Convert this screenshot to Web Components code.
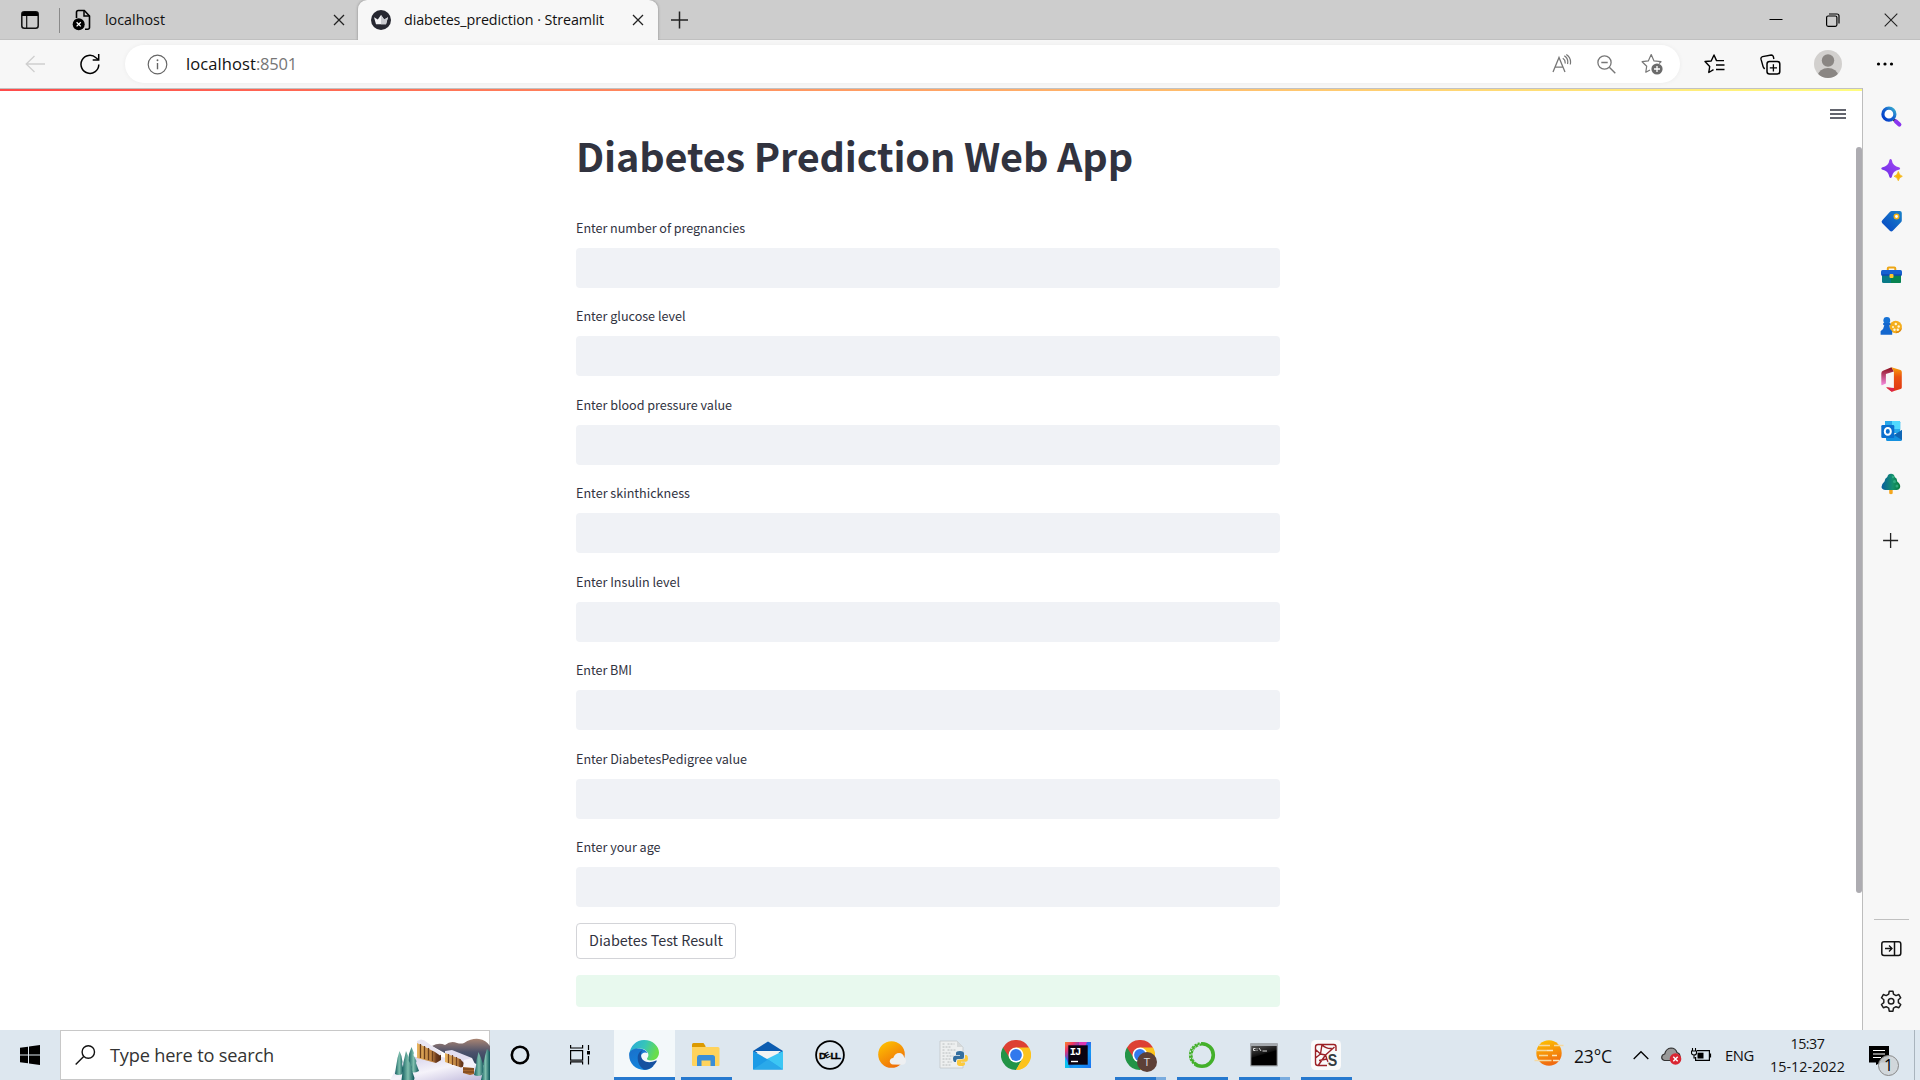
<!DOCTYPE html>
<html lang="en">
<head>
<meta charset="utf-8">
<title>diabetes_prediction · Streamlit</title>
<style>
html,body{margin:0;height:100%;overflow:hidden;background:#fff}
body{font-family:"Open Sans","Noto Sans",sans-serif;color:#111}
</style>
</head>
<body>
<desktop-screen></desktop-screen>
<script>
const ICONS = {
tabs:[18,18,`<rect x=".8" y=".8" width="16.4" height="16.4" rx="2.5" fill="none" stroke="#111" stroke-width="1.5"/><path d="M1 5V3a2 2 0 0 1 2-2h12a2 2 0 0 1 2 2v2z" fill="#000"/><path d="M5.7 5v12" stroke="#111" stroke-width="1.2"/>`],
filex:[20,22,`<path d="M4.5 9V3.3A1.8 1.8 0 0 1 6.300 1.500h6l5.200 5.500v11.500a1.800 1.800 0 0 1-1.800 1.800h-2.700" fill="none" stroke="#000" stroke-width="1.600"/><path d="M12 1.500V7h5.500" fill="none" stroke="#000" stroke-width="1.500"/><circle cx="6.700" cy="15.300" r="6" fill="#000"/><path d="M4.600 13.200l4.200 4.200m0-4.200l-4.200 4.200" stroke="#fff" stroke-width="1.300"/>`],
close:[12,12,`<path d="M1 1l10 10M11 1L1 11" stroke="#222" stroke-width="1.300"/>`],
plus:[18,18,`<path d="M8.500 .5v17M0 9h17" stroke="#222" stroke-width="1.500"/>`],
crown:[20,20,`<circle cx="10" cy="10" r="10" fill="#262730"/><path d="M3 7.200l3.800 2.300L10 5l3.200 4.500L17 7.200l-2 7H5z" fill="#f2f2f4"/><path d="M10 5l3.200 4.500L17 7.200l-2 7H10z" fill="#c9cacf"/>`],
min:[14,14,`<path d="M.5 6.500h13" stroke="#000"/>`],
restore:[14,14,`<rect x=".6" y="3" width="10.300" height="10.300" rx="1.500" fill="none" stroke="#000" stroke-width="1.200"/><path d="M3 1h8a2 2 0 0 1 2 2v7.500" fill="none" stroke="#000" stroke-width="1.200"/>`],
winclose:[14,14,`<path d="M.7.7l12.600 12.600M13.300.7L.7 13.300" stroke="#222" stroke-width="1.100"/>`],
back:[20,18,`<path d="M9.500 1L1.200 9l8.300 8M1.200 9H20" fill="none" stroke="#cfcfcf" stroke-width="1.300"/>`],
reload:[20,22,`<path d="M18.800 11.500A8.900 9 0 1 1 16 4.800l2.300 2" fill="none" stroke="#000" stroke-width="1.500"/><path d="M18.700 1v6h-6" fill="none" stroke="#000" stroke-width="1.500"/>`],
info:[21,21,`<circle cx="10.500" cy="10.500" r="9.300" fill="none" stroke="#666" stroke-width="1.200"/><path d="M10.500 9v6.300" stroke="#666" stroke-width="1.400"/><circle cx="10.500" cy="6.300" r=".95" fill="#666"/>`],
read:[20,20,`<path d="M1 18L7 3.500l6 14.500M3 13.200h8" fill="none" stroke="#777" stroke-width="1.300"/><path d="M10.800 4.300q2.900 2 2.200 5.200M12.300 1.800q4.500 3 3.200 8.200M14.300 .5q5.300 3.500 4 10" fill="none" stroke="#777" stroke-width="1.200"/>`],
zoomout:[19,19,`<circle cx="7.500" cy="7.500" r="6.600" fill="none" stroke="#777" stroke-width="1.300"/><path d="M4.300 7.500h6.400M12.300 12.300l6 6" stroke="#777" stroke-width="1.400"/>`],
staradd:[22,22,`<path d="M9 17L4.800 19.200l.9-6L1.100 8.700l6.200-.8L10.200 1.500 13 7.900l7 .8-2 1.800" fill="none" stroke="#777" stroke-width="1.200" stroke-linejoin="round"/><circle cx="16" cy="16" r="5.600" fill="#6b6b6b"/><path d="M16 13v6M13 16h6" stroke="#fff" stroke-width="1.300"/>`],
starlist:[21,20,`<path d="M9.500 15.700L4.800 18.500l.9-6L1 7.500 7.200 7 10 1l2.500 5.600H20" fill="none" stroke="#000" stroke-width="1.400" stroke-linejoin="round"/><path d="M12 11h8.500M12 15.500h8.500" stroke="#000" stroke-width="1.400"/>`],
collect:[21,21,`<rect x="7" y="7.500" width="12.800" height="12.500" rx="2.500" fill="none" stroke="#000" stroke-width="1.500"/><path d="M13.400 10.200v7.200M9.800 13.800h7.200" stroke="#000" stroke-width="1.300"/><path d="M4.600 15L3.200 13 1 5.200q-.4-2 1.500-2.600L11.300 1q1.500 0 2 1.500l.6 2.500" fill="none" stroke="#000" stroke-width="1.400"/>`],
avatar:[28,28,`<defs><clipPath id="c"><circle cx="14" cy="14" r="14"/></clipPath></defs><g clip-path="url(#c)"><rect width="28" height="28" fill="#d2d0ce"/><circle cx="14" cy="10.500" r="6.200" fill="#8a8683"/><ellipse cx="14" cy="25.500" rx="10" ry="7.500" fill="#8a8683"/></g>`],
dots:[18,6,`<circle cx="2.500" cy="3" r="1.600"/><circle cx="9" cy="3" r="1.600"/><circle cx="15.500" cy="3" r="1.600"/>`],
menu:[16,10,`<path d="M0 1h16M0 5h16M0 9h16" stroke="#31333f" stroke-width="1.700"/>`],
sSearch:[24,24,`<defs><linearGradient id="g" x1="0" y1="1" x2="1" y2="0"><stop offset="0" stop-color="#0038c8"/><stop offset=".55" stop-color="#1562d0"/><stop offset="1" stop-color="#3ab0cf"/></linearGradient></defs><path d="M14.800 15.500l2 2" stroke="#333" stroke-width="3"/><circle cx="9.900" cy="10.200" r="6" fill="#fff" stroke="url(#g)" stroke-width="3.200"/><path d="M17 17.500l3.300 3" stroke="#8a35ee" stroke-width="4.200" stroke-linecap="round"/>`],
sSpark:[24,24,`<defs><linearGradient id="g" x1="0" y1="1" x2="1" y2="0"><stop offset="0" stop-color="#6a2be8"/><stop offset="1" stop-color="#a44af2"/></linearGradient></defs><path d="M10.500 2.700q1.100-1.600 2.200 0 .8 6.300 7.800 7.800 1.400.9 0 1.900-7 1.200-7.800 7.900-1.100 1.600-2.200 0-.9-6.700-7.600-7.900-1.400-1 0-1.900 6.800-1.300 7.600-7.800z" fill="url(#g)"/><path d="M19.300 14.500q.8 4 4 4.800-3.200.8-4 4.400-.8-3.600-4.200-4.400 3.400-.8 4.200-4.800z" fill="#f5b40d" stroke="#f5b40d" stroke-width=".8"/>`],
sTag:[24,24,`<defs><linearGradient id="g" x1="0" y1="1" x2="1" y2="0"><stop offset="0" stop-color="#0645c5"/><stop offset="1" stop-color="#1b82c7"/></linearGradient></defs><path d="M12.800 2h8q2 0 2 2v7.500q0 1-.8 1.800l-8.200 8.500q-1.500 1.300-3 0l-7.500-7.500q-1.500-1.500 0-3L11 2.700q.8-.7 1.800-.7z" fill="url(#g)"/><circle cx="17.500" cy="7.500" r="2.200" fill="#fff" stroke="#f3b211" stroke-width="1.500"/>`],
sCase:[24,24,`<path d="M8.800 8V5.500q0-1 1-1h5.500q1 0 1 1V8" fill="none" stroke="#eda615" stroke-width="2"/><path d="M3 11h19v7.500q0 1.500-1.500 1.500h-16Q3 20 3 18.500z" fill="#087a86"/><path d="M12 12h10v6.500q0 1.500-1.500 1.500H12z" fill="#078350"/><rect x="2" y="7" width="21" height="5.500" rx="1.500" fill="#1660d0"/><path d="M2.500 12h20.200" stroke="#093da5"/><rect x="10.500" y="11" width="4" height="4" rx="1" fill="#ffc62b"/>`],
sChess:[24,24,`<circle cx="16.700" cy="13" r="6.200" fill="#f5ae1d"/><path d="M17 19.200a6.200 6.200 0 0 0 6-6q-2 4-6 4.500z" fill="#dc8810"/><g fill="#fff6d8"><circle cx="16.800" cy="10" r="1.200"/><circle cx="14" cy="13" r="1"/><circle cx="19.700" cy="12.500" r="1.200"/><circle cx="15.500" cy="15.700" r="1.200"/><circle cx="18.800" cy="15.700" r="1.200"/></g><circle cx="7.800" cy="6.500" r="3.400" fill="#1672d6"/><path d="M4.200 9h7.200v2l-1.200.3q0 3.500 3 6v3.500H1.600v-3.500q3.400-2.500 3.700-6L4.200 11z" fill="#1467ce"/>`],
sOffice:[24,25,`<defs><linearGradient id="g" x1="0" y1="0" x2="0" y2="1"><stop offset="0" stop-color="#f8a30a"/><stop offset=".4" stop-color="#ea5212"/><stop offset="1" stop-color="#e03514"/></linearGradient><linearGradient id="h" x1="0" y1="0" x2="0" y2="1"><stop offset="0" stop-color="#8a0b16"/><stop offset="1" stop-color="#f58be0"/></linearGradient></defs><path d="M12.500.2L4 3.700Q2.300 4.500 2.300 6.500v11q0 1 1.300.5l3.300-1.600V7l8-2.500z" fill="url(#h)"/><path d="M12.500.2l9 2.700q1.300.5 1.300 2v15.500q0 1-1.200 1.500l-9 2.800-5.500-4.200 7.800.7V4.500z" fill="url(#g)"/><path d="M7.200 20.300l7.800.7v3l-2.500.6z" fill="#dc244c"/>`],
sOutlook:[24,24,`<path d="M6 2h14q1.200 0 1.200 1.200V14H6z" fill="#28a8ea"/><path d="M13 2h7q1.200 0 1.200 1.200V10H13z" fill="#50d9ff"/><path d="M7 12l8 4 8-5v9.500q0 1.500-1.500 1.500H8.500Q7 22 7 20.500z" fill="#1490df"/><path d="M15 16l8-5v10z" fill="#1066b5"/><rect x="2.300" y="6" width="13" height="13" rx="1.300" fill="#0a6fce"/><ellipse cx="8.800" cy="12.400" rx="3" ry="3.400" fill="none" stroke="#fff" stroke-width="2"/>`],
sTree:[24,24,`<defs><linearGradient id="g"><stop offset="0" stop-color="#075ca0"/><stop offset=".6" stop-color="#15916c"/><stop offset="1" stop-color="#087a3b"/></linearGradient></defs><path d="M10.200 17h3.500v4.500q-1.700 1.500-3.500 0z" fill="#f5a71d"/><path d="M12 1.800q3 0 3.700 3.300 2.700 1.500 2.500 4.400 3.300 2.200 3 5.500-.7 3-3.700 3h-11q-3.700-.3-4-3 0-3 3-5.500.3-3.500 2.800-4.500.8-3.200 3.700-3.200z" fill="url(#g)"/><g fill="#3cb98e" opacity=".7"><circle cx="14" cy="5" r="1.200"/><circle cx="15.500" cy="9.500" r="1.500"/><circle cx="18" cy="14" r="1.500"/></g>`],
sPlus:[24,24,`<path d="M11.600 5v15M4.100 12.500h15" stroke="#222" stroke-width="1.300"/>`],
sPanel:[24,24,`<rect x="2.800" y="5.700" width="19" height="13.700" rx="2.200" fill="none" stroke="#111" stroke-width="1.500"/><path d="M15.500 5.500v14" stroke="#111" stroke-width="1.500"/><path d="M6 12.500h7M10 9.500l3 3-3 3" fill="none" stroke="#111" stroke-width="1.300"/>`],
sGear:[24,24,`<path d="M10.240 2.150L13.960 2.150L14.480 5.150L17 6.600L19.860 5.550L21.720 8.780L19.380 10.730L19.380 13.570L21.720 15.520L19.860 18.750L17 17.700L14.480 19.150L13.960 22.150L10.240 22.150L9.720 19.150L7.200 17.700L4.340 18.750L2.480 15.520L4.820 13.570L4.820 10.730L2.480 8.780L4.340 5.550L7.200 6.600L9.720 5.150z" fill="none" stroke="#1b1b1b" stroke-width="1.500" stroke-linejoin="round"/><circle cx="12.100" cy="12.200" r="2.800" fill="none" stroke="#1b1b1b" stroke-width="1.500"/>`],
win:[20,20,`<path d="M0 2.800L8 1.700v7.700H0zM9 1.500L20 0v9.400H9zM0 10.400h8v7.900l-8-1.100zM9 10.400h11V20L9 18.400z" fill="#000"/>`],
lens:[21,20,`<circle cx="13.300" cy="7" r="6.200" fill="none" stroke="#111" stroke-width="1.400"/><path d="M8.700 11.500L.7 19.400" stroke="#111" stroke-width="1.400"/>`],
village:[100,42,`<defs><linearGradient id="s" x1="0" y1="0" x2="1" y2="1"><stop offset="0" stop-color="#cfcbe8"/><stop offset=".5" stop-color="#f5f3fa"/><stop offset="1" stop-color="#bdb6da"/></linearGradient><linearGradient id="m" x1="0" y1="0" x2="0" y2="1"><stop offset="0" stop-color="#a98472"/><stop offset=".45" stop-color="#4c526b"/><stop offset="1" stop-color="#273e58"/></linearGradient><linearGradient id="w"><stop offset="0" stop-color="#e9b45f"/><stop offset=".65" stop-color="#b97c3d"/><stop offset=".8" stop-color="#6c3b1f"/><stop offset="1" stop-color="#54290f"/></linearGradient><linearGradient id="t"><stop offset="0" stop-color="#0d5a5c"/><stop offset=".5" stop-color="#7fbfae"/><stop offset="1" stop-color="#0b5257"/></linearGradient></defs>
<path d="M42 8q7-4 13-1 6-5 12-2 4 1 7 0 8-5 15-4Q96 2 100 8v22L60 18z" fill="url(#m)"/>
<path d="M0 42Q8 25 22 19L52 19 80 26l20 2v14z" fill="url(#s)"/>
<path d="M27 4L46 13l5 4v5l-5 3-19-5z" fill="url(#w)"/><path d="M27 3l4-1.500 3 .8L52 15l-2 2.500-5-3.500L27 5z" fill="#e9e6f3"/><path d="M30.500 6v14m4-12v13m4-11v12m4-9v10" stroke="#6b3f1c" stroke-width="1.300"/>
<path d="M55 14L71 20l4 4v4l-4 1.500L55 24z" fill="url(#w)"/><path d="M55 13l7-1 20 8-2 4-6 1-4-4-15-6z" fill="#e3dff0"/><path d="M58.500 16v9m4-8v10m4-8v9m3.500-7v8" stroke="#774520" stroke-width="1.200"/>
<path d="M73 29h11v7l-4 1-7-2z" fill="#a5642b"/><path d="M73 31h11M73 34h11" stroke="#6b3a18"/><path d="M74 22l8-2 3 6-1 4-11-1z" fill="#f4f2fa"/>
<g fill="url(#t)"><path d="M9.500 13l2 5 1 6-.5 2 1.500 5-1 5q-4 2-7.500 0l1-7 .5-3 1-6z"/><path d="M21.500 9l2.500 6-.5 2 3 6-.5 2 3 8q-6 3-10 0l-1-8 1-9z"/><path d="M16 13l3 7-.5 2 3.500 7-.5 2 3 9-.5 2H11.500l1-8 1-10z"/><path d="M88.500 14l2.500 6 2 6 1 6-2 5q-4 2-8 0l2-9 .5-6z"/><path d="M97 11l3 3v28h-9l2-9 .5-8 1.500-7z"/></g>`],
cortana:[20,20,`<circle cx="10" cy="10" r="8.200" fill="none" stroke="#000" stroke-width="2.600"/>`],
taskview:[20,20,`<rect x=".6" y="5.600" width="12" height="9.500" fill="none" stroke="#000" stroke-width="1.200"/><path d="M.6 0v3h12V0M.6 19.500v-2.700h12v2.700M18.500 0v5M18.500 11v8.500" fill="none" stroke="#000" stroke-width="1.200"/><path d="M17 6h3v3.500h-3z"/>`],
edge:[31,30,`<defs><linearGradient id="a" x1="0" y1="0" x2="1" y2=".3"><stop offset="0" stop-color="#27a8dd"/><stop offset=".55" stop-color="#37c5b8"/><stop offset="1" stop-color="#68dd4b"/></linearGradient><linearGradient id="b" x1="0" y1="0" x2=".6" y2="1"><stop offset="0" stop-color="#1b6fc9"/><stop offset="1" stop-color="#1187df"/></linearGradient></defs><path d="M.5 14C1 6 7.500 0 15 0c9 0 15 6.500 15 12.500 0 5-3.800 8-8 8-3 0-4.200-1-4-2 .2-.8 1.400-1.500 1.400-3.500 0-3-3.500-6.500-8.400-6.500C6 8.500 1.500 11 .5 14z" fill="url(#a)"/><path d="M.2 13.500C1.500 9.500 6 8 10.500 8.500c4 .3 7 2.300 8 4.500-3-1.500-6 0-6.500 3-.7 6 5 11 12.500 10-3 3-6.500 4-9.500 4C6.500 30-.7 23 .2 13.500z" fill="url(#b)"/><path d="M8.800 16c.5-3 2.500-5 5-6-2 2-2 3.500-1.700 6C13 22 20 24 27 20.500c.8-.3 1 .2.700.8C25 26 21 29.500 16 29.800 11 28 8 22 8.800 16z" fill="#1551a0"/>`],
folder:[29,24,`<path d="M0 1.500Q0 0 1.500 0h10l2 3v5H0z" fill="#dc9a00"/><path d="M0 4h26q1.500 0 1.500 1.500V22q0 1-1 1H1.300Q0 23 0 22z" fill="#ffd35c"/><path d="M5 23V14.500Q5 12 7 12h13.500q2.500 0 2.500 2.500V23h-4.500v-5.500h-9V23z" fill="#3a8ed8"/>`],
mail:[30,29,`<path d="M0 10L15 .5 30 10v2H0z" fill="#0c5cb0"/><path d="M2 10h26L15 20z" fill="#f3f3f3"/><path d="M30 10v18.500L13 18.500z" fill="#3cc6f4"/><path d="M0 10l14 8 16 10.500H0z" fill="#1c9be6"/><path d="M0 28.500L15 18.500l15 10z" fill="#2aa9ea"/>`],
dell:[30,30,`<circle cx="15" cy="15" r="13.900" fill="none" stroke="#000" stroke-width="1.800"/><text x="4" y="18.500" font-family="Liberation Sans" font-weight="700" font-size="9.700" stroke="#000" stroke-width=".35">D</text><text x="0" y="0" transform="translate(11.200 18.700) rotate(-28)" font-family="Liberation Sans" font-weight="700" font-size="8">E</text><text x="15.500" y="18.500" font-family="Liberation Sans" font-weight="700" font-size="9.700" stroke="#000" stroke-width=".35" textLength="10.500">LL</text>`],
sun:[28,28,`<defs><linearGradient id="g" x1="0" y1="0" x2=".6" y2="1"><stop offset="0" stop-color="#ffc800"/><stop offset="1" stop-color="#ef700a"/></linearGradient></defs><circle cx="13.500" cy="13.500" r="13.300" fill="url(#g)"/><path d="M15 23.500q-3-.3-3.300-3.200.3-3 3.500-3.300 1.800-5 6-5 4 .2 5 4.500 1.800.7 1.800 3.500-.3 3.500-3.500 3.700z" fill="#eef0f2"/>`],
pydoc:[30,30,`<path d="M1 1h17l6 6v21H1z" fill="#edefef" stroke="#c3c8ca" stroke-width=".8"/><path d="M18 1v6h6" fill="#d5d9da"/><path d="M3.500 4h3m2 0h7M3.500 7h9M3.500 10h3m2 0h8M3.500 13h8M3.500 16h2m2 0h7M3.500 19h8M3.500 22h3m2 0h4M3.500 25h8" stroke="#b8bcbd" stroke-dasharray="2 1"/><path d="M21 11q4 0 4 2.500v3.500q0 2-2 2h-4q-2 0-2 2v1h-1.500Q14 21.500 14 18.700t2.500-3H21v-.8h-4V13q0-2 4-2z" fill="#346f9f"/><path d="M22 26q-4 0-4-2.300V21q0-1.500 2-1.500h4q2 0 2-2V15h1.500Q29 15.500 29 18.500t-2 3.300h-5v.7h4V24q0 2-4 2z" fill="#fcca3d"/>`],
chrome:[30,30,`<path d="M15 15L2 7.500A15 15 0 0 1 28 7.500z" fill="#dd4033"/><path d="M15 15L2 7.500A15 15 0 0 0 15 30z" fill="#229446"/><path d="M15 7.500h13A15 15 0 0 1 15 30l6-11z" fill="#fcc31d"/><path d="M2 7.500L8.500 18.700 15 30l6.500-11.300z" fill="#229446"/><path d="M15 30l6.500-11.300L21 8H28A15 15 0 0 1 15 30z" fill="#fcc31d"/><path d="M2 7.500L8 17V7.500z" fill="#dd4033"/><circle cx="15" cy="15" r="7.500" fill="#fff"/><circle cx="15" cy="15" r="5.900" fill="#3179ed"/>`],
ij:[26,26,`<defs><linearGradient id="g" x1="0" y1="0" x2="1" y2="1"><stop offset="0" stop-color="#f78b2b"/><stop offset=".18" stop-color="#ee3466"/><stop offset=".4" stop-color="#3b55e8"/><stop offset=".65" stop-color="#159af5"/><stop offset="1" stop-color="#1b72f1"/></linearGradient></defs><rect width="26" height="26" fill="url(#g)"/><path d="M0 26V14l5 12z" fill="#0bc0ef"/><path d="M14 0h8l-2 5h-6z" fill="#dd37b4"/><rect x="3.300" y="3.300" width="19.400" height="19.400" fill="#0b0310"/><text x="4.700" y="13.400" fill="#fff" font-family="Liberation Mono" font-weight="700" font-size="10.500" textLength="11.500">IJ</text><path d="M6 19.500h7" stroke="#fff" stroke-width="1.400"/>`],
anaconda:[28,28,`<circle cx="14" cy="14" r="11.300" fill="none" stroke="#43b02a" stroke-width="3.600"/><path d="M13 1.500Q2 3.500 2 14t6 10" fill="none" stroke="#dde8ee" stroke-width="1.300" stroke-dasharray="1.500 2"/><path d="M12 4Q4 6 4 14q0 5 3 7" fill="none" stroke="#dde8ee" stroke-width=".9" stroke-dasharray="2 2"/>`],
cmd:[29,24,`<defs><linearGradient id="g" x1="0" y1="0" x2=".4" y2="1"><stop offset="0" stop-color="#555"/><stop offset=".5" stop-color="#111"/><stop offset=".55" stop-color="#000"/></linearGradient></defs><rect width="28" height="23.500" rx="1" fill="#a4a9ae"/><rect x="1.300" y="3" width="25.400" height="19.300" fill="url(#g)"/><path d="M3.500 5.500h2M3.500 7.500h2M3.500 5.500v2M7 5.500v.8M7 7v.8M9 5l2 3M12.500 8H17" stroke="#eee" stroke-width=".9" fill="none"/>`],
spyder:[30,30,`<rect width="30" height="30" rx="4.500" fill="#fafafa"/><path d="M25 11V7q0-2.500-2.300-2.500H7Q4.500 4.500 4.500 7v16q0 2.500 2.500 2.500h9M11 4.500L9.500 14l-5 4M9.500 14L4.500 9.500M9.500 14l5 1 9-8M14.500 15L18 25M14.500 15l-7 10M8 20.500l8-1.500M11.300 5q4 4 9.500 3.500" fill="none" stroke="#9b1f24" stroke-width="1.400" stroke-linejoin="round"/><text x="16.800" y="25.500" font-family="Liberation Sans" font-weight="700" font-size="16.500" fill="#33393e" stroke="#fafafa" stroke-width="2" paint-order="stroke" textLength="9.500" lengthAdjust="spacingAndGlyphs">S</text>`],
haze:[30,26,`<defs><linearGradient id="g" x1="0" y1="0" x2=".3" y2="1"><stop offset="0" stop-color="#ffc500"/><stop offset="1" stop-color="#f06b10"/></linearGradient></defs><circle cx="15" cy="13" r="12.700" fill="url(#g)"/><path d="M5 5.500h11M20 5.500h9.500M3 10.500h10M5 15.500h9M.5 20.500h17" stroke="#f5d9a0" stroke-width="1.600"/><path d="M13 10.500h6M18 15.500h5M19 20.500h6" stroke="#fbe7be" stroke-width="1.300"/>`],
chev:[16,10,`<path d="M.7 9L8 1.700 15.300 9" fill="none" stroke="#000" stroke-width="1.300"/>`],
cloud:[21,18,`<path d="M3.500 13.500Q.7 13 .7 10.300.8 7.500 3.700 7 5 1.500 10 1q4.500 0 6 4.500 3 .8 3 4v4z" fill="#999" stroke="#333" stroke-width="1.200"/><circle cx="14.500" cy="12" r="5.800" fill="#d92632"/><path d="M12.300 9.800l4.400 4.400m0-4.400l-4.400 4.400" stroke="#fff" stroke-width="1.400"/>`],
battery:[21,14,`<path d="M6 2.600h12.400v9.800H4.600V9M19.500 5.500v4" fill="none" stroke="#000" stroke-width="1.200"/><path d="M6.500 4.700h6v5.800h-6z"/><path d="M1.500 0v3M4.500 0v3M.5 3h5v2q0 2-2.500 2T.5 5zM3 7v3h1.500" fill="none" stroke="#000" stroke-width="1.100"/>`],
note:[20,19,`<path d="M0 0h20v16.500h-8L7 19v-2.500H0z"/><path d="M4 4.500h12M4 8h12M4 11.500h8" stroke="#fff" stroke-width="1.100"/>`]
};

const define = (name, css, html, setup) => customElements.define(name, class extends HTMLElement {
  connectedCallback() {
    if (this.shadowRoot) return;
    const root = this.attachShadow({mode: "open"});
    root.innerHTML = `<style>:host{display:block;box-sizing:border-box}*{box-sizing:border-box}${css}</style>${typeof html === "function" ? html(this) : html}`;
    if (setup) setup(this, root);
  }
});

/* An icon by name, at its natural size. */
define("ui-icon", `:host{flex:none}svg{display:block}`, el => {
  const [w, h, body] = ICONS[el.getAttribute("name")];
  return `<svg width="${w}" height="${h}" viewBox="0 0 ${w} ${h}">${body}</svg>`;
});

/* A single line of text tracked so that it fills the width given in "w". */
define("fit-text", `:host{flex:none;white-space:nowrap}span{display:inline-block}`, `<span><slot></slot></span>`, (el, root) => {
  const w = +el.getAttribute("w"), span = root.querySelector("span"), n = el.textContent.length;
  el.style.width = w + "px";
  const natural = span.getBoundingClientRect().width;
  span.style.letterSpacing = ((w - natural) / n).toFixed(3) + "px";
});

define("browser-tab", `:host{display:flex;align-items:center;flex:none;height:40px;font-size:14.300px;line-height:20px;color:#111}
:host([active]){background:#f7f7f7;border-radius:9px 9px 0 0;box-shadow:0 0 3px #0005;clip-path:inset(0 -4px 0 -4px)}
.x{margin-left:auto}fit-text{margin-left:13px}`,
el => `<ui-icon name="${el.getAttribute("icon")}"></ui-icon><fit-text w="${el.getAttribute("w")}">${el.getAttribute("label")}</fit-text><ui-icon class="x" name="close"></ui-icon>`);

define("tab-strip", `:host{display:flex;align-items:center;height:40px;background:#cdcdcd;box-shadow:inset 0 -1px 0 #c0c0c0}
.bar{width:1px;height:25px;background:#8a8a8a;margin-left:20px;flex:none}`,
`<ui-icon name="tabs" style="margin-left:21px"></ui-icon><div class="bar"></div>
<browser-tab icon="filex" label="localhost" w="60" style="width:298px;padding:0 13px 0 12px"></browser-tab>
<browser-tab active icon="crown" label="diabetes_prediction · Streamlit" w="200" style="width:300px;padding:0 14px 0 13px"></browser-tab>
<ui-icon name="plus" style="margin-left:13px"></ui-icon>
<ui-icon name="min" style="margin-left:auto"></ui-icon><ui-icon name="restore" style="margin-left:43px"></ui-icon><ui-icon name="winclose" style="margin:0 22px 0 44px"></ui-icon>`);

define("tool-bar", `:host{display:flex;align-items:center;height:48px;background:#f7f7f7}
.omni{display:flex;align-items:center;flex:none;width:1555px;height:38px;margin-left:25px;padding:0 17px 0 22px;border-radius:19px;background:#fff;box-shadow:0 0 5px #0000000d;font-size:16.500px;line-height:22px}
.omni fit-text{color:#111;margin-left:18px}.omni fit-text+fit-text{color:#767676;margin-left:0}`,
`<ui-icon name="back" style="margin-left:25px"></ui-icon><ui-icon name="reload" style="margin-left:35px"></ui-icon>
<div class="omni"><ui-icon name="info"></ui-icon><fit-text w="70">localhost</fit-text><fit-text w="41">:8501</fit-text>
<ui-icon name="read" style="margin-left:auto"></ui-icon><ui-icon name="zoomout" style="margin-left:25px"></ui-icon><ui-icon name="staradd" style="margin-left:25px"></ui-icon></div>
<ui-icon name="starlist" style="margin-left:24px"></ui-icon><ui-icon name="collect" style="margin-left:35px"></ui-icon><ui-icon name="avatar" style="margin-left:33px"></ui-icon><ui-icon name="dots" style="margin-left:34px"></ui-icon>`);

define("text-field", `:host{height:88.430px}
label{display:block;height:30px;font-size:12.600px;line-height:20px}
.box{height:40px;border-radius:4px;background:#f0f2f6}`,
el => `<label><fit-text w="${el.getAttribute("w")}">${el.getAttribute("label")}</fit-text></label><div class="box"></div>`);

define("app-page", `:host{display:flex;flex:1;background:#fff;overflow:hidden;font-family:"Noto Sans CJK JP","Noto Sans CJK SC",sans-serif;color:#31333f;flex-direction:column;border-top:1px solid #c2c2c2}
.decor{height:2px;flex:none;background:linear-gradient(90deg,#ff4b4b,#fffd80)}
.body{display:flex;flex:1;min-height:0}
.col{width:704px;margin-left:576px;padding-top:34px}
h1{margin:0;font-size:39.600px;line-height:60px;height:93px;font-weight:700}
.btn{display:flex;align-items:center;justify-content:center;width:160px;height:36px;margin-top:-2.440px;padding-bottom:1px;border:1px solid #d3d4d8;border-radius:4px;font-size:14.400px;line-height:24px}
.ok{height:32px;margin-top:16px;border-radius:4px;background:#e8f9ee}
.right{margin-left:auto;display:flex;flex-direction:column;align-items:flex-end}
.right ui-icon{margin:18px 16px 0 0}
.thumb{width:6px;height:746px;margin-top:28px;border-radius:3px;background:#adacb1}`,
`<div class="decor"></div><div class="body"><div class="col"><h1><fit-text w="557">Diabetes Prediction Web App</fit-text></h1>
<text-field w="169" label="Enter number of pregnancies"></text-field>
<text-field w="109.500" label="Enter glucose level"></text-field>
<text-field w="156" label="Enter blood pressure value"></text-field>
<text-field w="114" label="Enter skinthickness"></text-field>
<text-field w="104" label="Enter Insulin level"></text-field>
<text-field w="56" label="Enter BMI"></text-field>
<text-field w="171" label="Enter DiabetesPedigree value"></text-field>
<text-field w="84.500" label="Enter your age"></text-field>
<div class="btn"><fit-text w="134">Diabetes Test Result</fit-text></div><div class="ok"></div></div>
<div class="right"><ui-icon name="menu"></ui-icon><div class="thumb"></div></div></div>`);

define("side-bar", `:host{display:flex;flex-direction:column;flex:none;width:58px;height:942px;padding-left:16px;background:#f7f7f7;border-left:1px solid #bdbdbd}
hr{width:35px;height:1px;flex:none;border:0;background:#c0c0c0;margin:367px 0 0 -5px}`,
[["sSearch",16],["sSpark",29],["sTag",28],["sCase",30],["sChess",27],["sOffice",29],["sOutlook",27],["sTree",29],["sPlus",32]].map(([n, m]) => `<ui-icon name="${n}" style="margin-top:${m}px"></ui-icon>`).join("") +
`<hr><ui-icon name="sPanel" style="margin-top:16px"></ui-icon><ui-icon name="sGear" style="margin-top:29px"></ui-icon>`);

/* A running or pinned program; "on" is the width of its underline, "more" of the stacked part. */
define("task-item", `:host{display:flex;flex-direction:column;align-items:center;flex:none;width:62px;height:50px}
:host([active]){background:#f3f8fa}
.pic{position:relative;display:flex;align-items:center;justify-content:center;flex:1}
.line{display:flex;height:3px;width:100%;justify-content:center}
.line i{background:#2679cf}.line i+i{background:#7aacde}
.t{position:absolute;left:12px;top:22px;width:20px;height:20px;border-radius:50%;background:#5d4037;color:#ddd;font-size:11.500px;line-height:20px;text-align:center}`,
el => { const on = +el.getAttribute("on") || 0, more = +el.getAttribute("more") || 0, badge = el.getAttribute("badge");
  return `<div class="pic"><ui-icon name="${el.getAttribute("icon")}" style="margin-top:3px"></ui-icon>${badge ? `<span class="t">${badge}</span>` : ""}</div><div class="line">${on ? `<i style="width:${on}px"></i>` : ""}${more ? `<i style="width:${more}px"></i>` : ""}</div>`; });

define("task-bar", `:host{display:flex;align-items:center;height:50px;background:#dde7ef;color:#111;overflow:hidden}
.search{display:flex;align-items:center;flex:none;width:430px;height:50px;margin-left:20px;border:1px solid #c8c8c8;background:#fff;padding-left:14px;font-size:18.200px;line-height:26px;color:#333}
.village{margin:7px -1px 0 auto}
.clock{flex:none;width:75px;margin-left:16px;font-size:14.300px;line-height:23px;display:flex;flex-direction:column;align-items:center}
.note{position:relative;margin-left:24px;width:20px;height:19px;flex:none}
.badge{position:absolute;left:9px;top:9px;width:21px;height:21px;border:1px solid #888;border-radius:50%;background:#d0d5d8e8;text-align:center;font-size:16px;line-height:19px;color:#000}
.end{width:1px;height:50px;margin:0 5px 0 auto;background:#a9b4bd}`,
`<ui-icon name="win" style="margin-left:20px"></ui-icon>
<div class="search"><ui-icon name="lens"></ui-icon><fit-text w="164" style="margin-left:14px">Type here to search</fit-text><ui-icon class="village" name="village"></ui-icon></div>
<ui-icon name="cortana" style="margin-left:20px"></ui-icon><ui-icon name="taskview" style="margin-left:40px"></ui-icon>
<task-item active icon="edge" on="61" style="width:61px;margin-left:24px"></task-item>
<task-item icon="folder" on="51" style="width:63px"></task-item>
<task-item icon="mail" style="margin-left:-1px"></task-item><task-item icon="dell"></task-item><task-item icon="sun"></task-item><task-item icon="pydoc"></task-item><task-item icon="chrome"></task-item><task-item icon="ij"></task-item>
<task-item icon="chrome" badge="T" on="41" more="10"></task-item><task-item icon="anaconda" on="51"></task-item><task-item icon="cmd" on="41" more="10"></task-item><task-item icon="spyder" on="51"></task-item>
<ui-icon name="haze" style="margin:-5px 0 0 auto"></ui-icon><fit-text w="38" style="margin-left:10px;font-size:17.500px;line-height:24px;padding-top:2px">23°C</fit-text>
<ui-icon name="chev" style="margin-left:21px"></ui-icon><ui-icon name="cloud" style="margin:1px 0 0 12px"></ui-icon><ui-icon name="battery" style="margin-left:9px"></ui-icon>
<fit-text w="29" style="margin-left:13px;font-size:14.800px;line-height:20px">ENG</fit-text>
<div class="clock"><fit-text w="34">15:37</fit-text><fit-text w="75">15-12-2022</fit-text></div>
<div class="note"><ui-icon name="note"></ui-icon><span class="badge">1</span></div><div class="end" style="margin-left:25px"></div>`);

define("desktop-screen", `:host{width:1920px;height:1080px;overflow:hidden;display:flex;flex-direction:column}
.main{display:flex;height:942px;flex:none}`,
`<tab-strip></tab-strip><tool-bar></tool-bar><div class="main"><app-page></app-page><side-bar></side-bar></div><task-bar></task-bar>`);
</script>
</body>
</html>
